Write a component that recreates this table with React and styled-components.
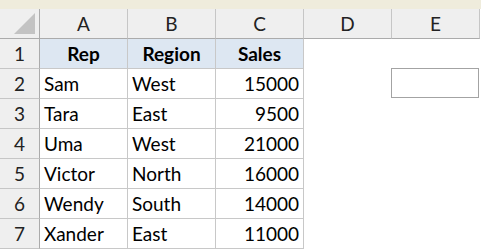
import React from 'react'
import styled, { createGlobalStyle } from 'styled-components'

const rows = [
  { rep: 'Sam', region: 'West', sales: 15000 },
  { rep: 'Tara', region: 'East', sales: 9500 },
  { rep: 'Uma', region: 'West', sales: 21000 },
  { rep: 'Victor', region: 'North', sales: 16000 },
  { rep: 'Wendy', region: 'South', sales: 14000 },
  { rep: 'Xander', region: 'East', sales: 11000 },
]

const cols = ['A', 'B', 'C', 'D', 'E']

function App() {
  return (
    <>
      <Global />
      <Sheet>
        <TopBand />
        <Grid>
          <Corner>
            <svg width="22" height="22" viewBox="0 0 22 22">
              <polygon points="21,0 21,21 0,21" fill="#c3c3c3" />
            </svg>
          </Corner>
          {cols.map(c => (
            <ColHead key={c}>{c}</ColHead>
          ))}

          <RowHead>1</RowHead>
          <Cell head>Rep</Cell>
          <Cell head>Region</Cell>
          <Cell head>Sales</Cell>
          <Cell blank />
          <Cell blank />

          {rows.map((r, i) => (
            <React.Fragment key={r.rep}>
              <RowHead>{i + 2}</RowHead>
              <Cell>{r.rep}</Cell>
              <Cell>{r.region}</Cell>
              <Cell num>{r.sales}</Cell>
              <Cell blank />
              <Cell blank selected={i === 0} />
            </React.Fragment>
          ))}
        </Grid>
      </Sheet>
    </>
  )
}

const Global = createGlobalStyle`
  body {
    margin: 0;
    background: #fff;
    font-family: Lato, "Open Sans", sans-serif;
  }
`

const Sheet = styled.div`
  width: 481px;
  height: 250px;
  overflow: hidden;
  background: #fff;
`

const TopBand = styled.div`
  height: 9px;
  background: #efecdc;
`

const Grid = styled.div`
  display: grid;
  grid-template-columns: 40px repeat(5, 88px);
  grid-auto-rows: 30px;
  font-size: 19px;
  color: #000;
`

const Corner = styled.div`
  box-sizing: border-box;
  background: #efefef;
  border-right: 1px solid #ababab;
  border-bottom: 1px solid #ababab;
  display: flex;
  align-items: flex-end;
  justify-content: flex-end;
  padding: 0 3px 3px 0;
`

const ColHead = styled.div`
  box-sizing: border-box;
  background: #efefef;
  border-right: 1px solid #c6c6c6;
  border-bottom: 1px solid #ababab;
  display: flex;
  align-items: flex-end;
  justify-content: center;
  padding-bottom: 3px;
  color: #222;
`

const RowHead = styled.div`
  box-sizing: border-box;
  background: #efefef;
  border-right: 1px solid #ababab;
  border-bottom: 1px solid #c6c6c6;
  display: flex;
  align-items: flex-end;
  justify-content: center;
  padding-bottom: 3px;
  color: #222;
`

const Cell = styled.div`
  position: relative;
  box-sizing: border-box;
  border-right: 1px solid ${p => (p.blank ? 'transparent' : '#c8c8c8')};
  border-bottom: 1px solid ${p => (p.blank ? 'transparent' : '#c8c8c8')};
  display: flex;
  align-items: flex-end;
  padding: 0 4px 3px 4px;
  white-space: nowrap;
  background: ${p => (p.head ? '#dde7f2' : '#fff')};
  font-weight: ${p => (p.head ? 700 : 400)};
  justify-content: ${p => (p.head ? 'center' : p.num ? 'flex-end' : 'flex-start')};

  ${p =>
    p.selected &&
    `
    &::after {
      content: '';
      position: absolute;
      left: -1px;
      top: -1px;
      right: 0;
      bottom: 0;
      border: 1px solid #a3a3a3;
    }
  `}
`

export default App
